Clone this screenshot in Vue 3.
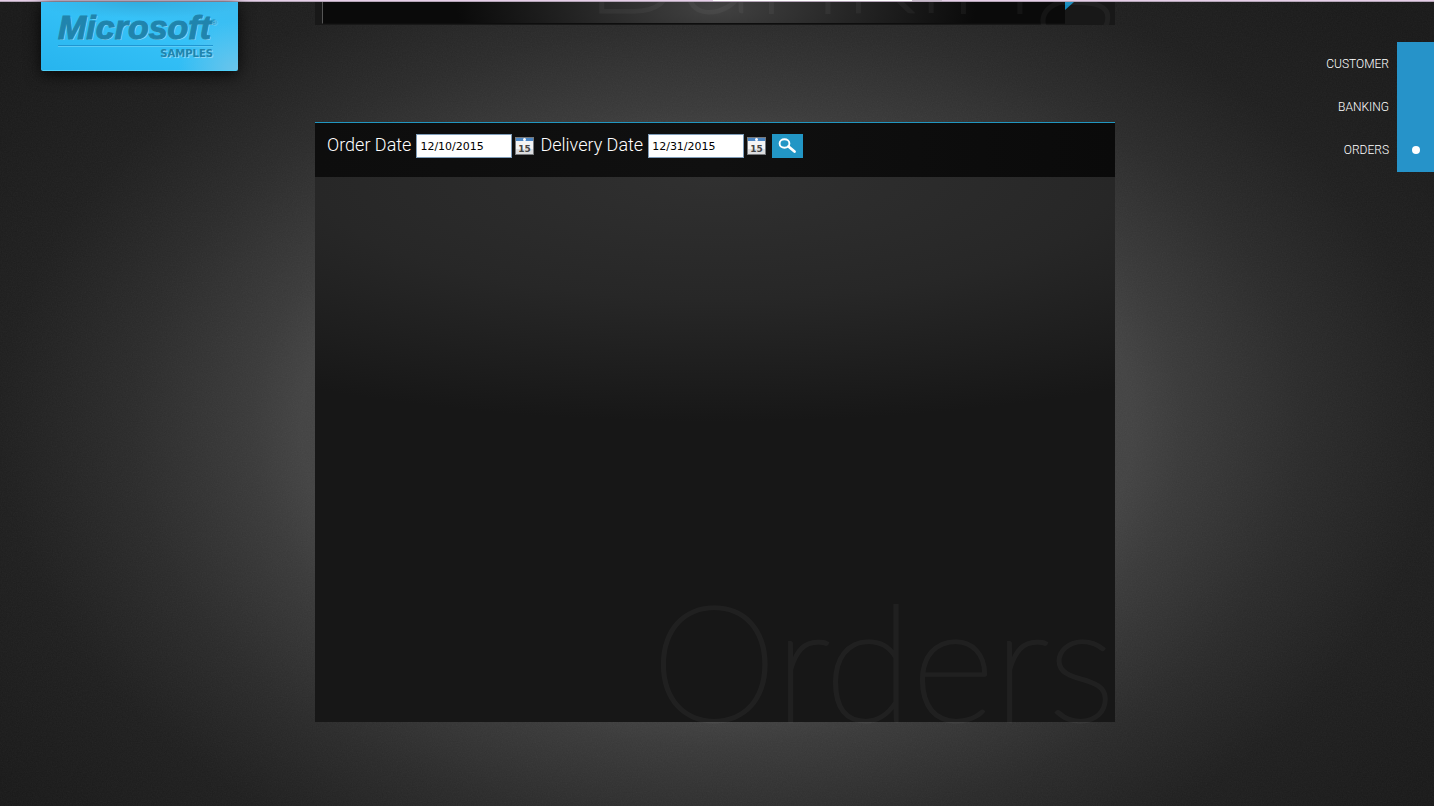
<script setup>
import { ref } from 'vue'

const orderDate = ref('12/10/2015')
const deliveryDate = ref('12/31/2015')
const links = [
  { id: 'customer', label: 'CUSTOMER' },
  { id: 'banking', label: 'BANKING' },
  { id: 'orders', label: 'ORDERS' }
]
const active = ref('orders')
</script>

<template>
  <div class="page">
    <svg class="grain" aria-hidden="true">
      <filter id="grain">
        <feTurbulence type="fractalNoise" baseFrequency="0.8" numOctaves="2" seed="4" />
        <feColorMatrix type="saturate" values="0" />
      </filter>
      <rect width="100%" height="100%" filter="url(#grain)" />
    </svg>
    <div class="strip"><i class="tab"></i><i class="tab-end"></i></div>

    <div class="columns">
      <header>
        <a class="logo" href="#customer">
          <span class="brand">Microsoft<sup>®</sup></span>
          <span class="sub">SAMPLES</span>
        </a>
      </header>

      <main>
        <section id="banking" class="banking">
          <div class="stage"></div>
          <svg class="corner" viewBox="0 0 9 8" aria-hidden="true"><path d="M0 0h9L0 8z" fill="#1489bd" /></svg>
          <h2 class="watermark">Banking</h2>
        </section>

        <section id="orders" class="orders">
          <form class="search" @submit.prevent>
            <label for="order-date">Order Date</label>
            <input id="order-date" v-model="orderDate" type="text" />
            <button class="cal" type="button" aria-label="Pick order date">
              <svg viewBox="0 0 19 18">
                <path d="M0 0h19v18H0z" fill="#77797c" /><path d="M1 1h17v3H1z" fill="#4b86c4" />
                <path d="M1 4h17v13H1z" fill="#f4f4f4" /><path d="M1 12h17v5H1z" fill="#dcdddf" />
                <circle cx="9.500" cy="2.500" r="1.500" fill="#fff" />
                <text x="9.500" y="15">15</text>
              </svg>
            </button>
            <label for="delivery-date">Delivery Date</label>
            <input id="delivery-date" v-model="deliveryDate" type="text" />
            <button class="cal" type="button" aria-label="Pick delivery date">
              <svg viewBox="0 0 19 18">
                <path d="M0 0h19v18H0z" fill="#77797c" /><path d="M1 1h17v3H1z" fill="#4b86c4" />
                <path d="M1 4h17v13H1z" fill="#f4f4f4" /><path d="M1 12h17v5H1z" fill="#dcdddf" />
                <circle cx="9.500" cy="2.500" r="1.500" fill="#fff" />
                <text x="9.500" y="15">15</text>
              </svg>
            </button>
            <button class="go" type="submit" aria-label="Search">
              <svg viewBox="0 0 31 24" fill="none" stroke="#fff">
                <ellipse cx="12.500" cy="9.500" rx="4.900" ry="4.200" stroke-width="1.900" />
                <path d="M16.500 12.500l6 5" stroke-width="2.800" stroke-linecap="round" />
              </svg>
            </button>
          </form>
          <div class="results">
            <h2 class="watermark">Orders</h2>
          </div>
        </section>
      </main>

      <nav aria-label="Sections">
        <a v-for="l in links" :key="l.id" :href="'#' + l.id" @click="active = l.id">
          <span>{{ l.label }}</span>
          <i class="rail"><b v-if="active === l.id"></b></i>
        </a>
      </nav>
    </div>
  </div>
</template>

<style>
body {
  margin: 0;
  background: #1d1d1d;
}
</style>

<style scoped>
.page {
  position: relative;
  min-height: 100vh;
  overflow: hidden;
  font-family: Roboto, "Liberation Sans", sans-serif;
  color: #fff;
  background: radial-gradient(ellipse 50% 61% at 50% 53%, #505050 0%, #434343 58%, #3a3a3a 65%, #2b2b2b 82%, #1f1f1f 100%, #191919 125%);
}
.grain {
  position: absolute;
  inset: 0;
  width: 100%;
  height: 100%;
  opacity: 0.05;
}
.strip {
  position: relative;
  display: grid;
  grid-template-columns: 713fr 199fr 30fr 492fr;
  height: 1px;
  background: #e6cfe8;
  border-bottom: 1px solid #b5a5b8;
}
.tab {
  grid-column: 2;
  background: #fff;
}
.tab-end {
  background: #c9bccb;
}
.columns {
  position: relative;
  display: grid;
  grid-template-columns: minmax(0, 1fr) minmax(0, 800px) minmax(0, 1fr);
  align-items: start;
  padding-right: 4px;
}
.logo {
  display: flex;
  flex-direction: column;
  box-sizing: border-box;
  width: 197px;
  height: 69px;
  margin-left: 41px;
  padding: 8px 25px 0 17px;
  border-radius: 0 0 2px 2px;
  color: #2084ad;
  text-decoration: none;
  background:
    radial-gradient(ellipse 60px 50px at 100% 100%, #6cc4ea, transparent),
    radial-gradient(ellipse 110px 16px at 50% 0, #32addf, transparent),
    linear-gradient(20deg, #27b4ee, #36c2f8 60%, #3dbcf0);
  box-shadow: 0 3px 16px #000c, inset 0 -1px #4fd0fa;
}
.brand {
  font: italic bold 34px/34px "Liberation Sans", Arial, sans-serif;
  white-space: nowrap;
  text-shadow: 1px 1px #8ad6f5;
  -webkit-text-stroke: 1px #2084ad;
  border-bottom: 1px solid #1f96d2;
  box-shadow: 0 1px #5ccbf5;
  height: 35px;
}
.brand sup {
  font: 8px/8px "Liberation Sans", Arial, sans-serif;
  -webkit-text-stroke: 0;
  vertical-align: 14px;
}
.sub {
  margin-top: 2px;
  font: bold 10px/12px "DejaVu Sans", sans-serif;
  text-align: right;
  text-shadow: 1px 1px #8ad6f5;
}
.banking {
  position: relative;
  height: 23px;
  margin-bottom: 97px;
  overflow: hidden;
  background: #181818;
}
.stage {
  height: 21px;
  margin: 0 50px 0 7px;
  border-left: 1px solid #555;
  border-bottom: 1px solid #0e0e0e;
  background: radial-gradient(ellipse 260px 90px at 53% 30%, #424242, #2c2c2c 40%, #0a0a0a 100%);
}
.corner {
  position: absolute;
  top: 0;
  right: 41px;
  width: 9px;
  height: 8px;
}
.watermark {
  position: absolute;
  right: 0;
  bottom: -30px;
  margin: 0;
  font-family: Lato, "Liberation Sans", sans-serif;
  font-size: 160px;
  font-weight: 100;
  line-height: 186px;
  color: #fff;
  -webkit-text-stroke: 3px #fff;
  opacity: 0.04;
}
.banking .watermark {
  bottom: -18px;
}
.orders {
  border-top: 1px solid #2196c0;
}
.search {
  display: flex;
  align-items: center;
  height: 24px;
  padding: 11px 12px 19px;
  background: linear-gradient(90deg, #0d0d0d, #101010 50%, #0a0a0a);
}
.search label {
  font-size: 18px;
  font-weight: 300;
  line-height: 20px;
  margin-right: 5px;
  padding-bottom: 2px;
  white-space: nowrap;
}
.search input {
  box-sizing: border-box;
  width: 96px;
  height: 24px;
  padding: 0 3px;
  border: 1px solid #7f9db9;
  background: #fff;
  color: #000;
  font: 11px "DejaVu Sans", sans-serif;
}
.search button {
  padding: 0;
  border: 0;
  cursor: pointer;
}
.search svg {
  display: block;
  width: 100%;
}
.cal {
  width: 19px;
  height: 18px;
  margin: 0 6px 0 3px;
  background: none;
}
.cal text {
  font: bold 9px "DejaVu Sans", sans-serif;
  text-anchor: middle;
  fill: #444;
}
.go {
  width: 31px;
  height: 24px;
  background: #2296c5;
}
.results {
  position: relative;
  height: 545px;
  background: radial-gradient(ellipse 800px 245px at 50% 0, #303030, #272727 50%, #171717);
}
nav {
  margin: 40px -4px 0 0;
  border-bottom: 1px solid transparent;
  background: linear-gradient(#2693c9, #2693c9) right / 37px 100% no-repeat border-box;
}
nav a {
  display: flex;
  justify-content: flex-end;
  align-items: center;
  height: 43px;
  color: #fff;
  font-size: 12px;
  font-weight: 300;
  text-decoration: none;
}
.rail {
  display: flex;
  justify-content: center;
  width: 37px;
  margin-left: 8px;
}
.rail b {
  width: 8px;
  height: 8px;
  border-radius: 50%;
  background: #fff;
}
</style>
